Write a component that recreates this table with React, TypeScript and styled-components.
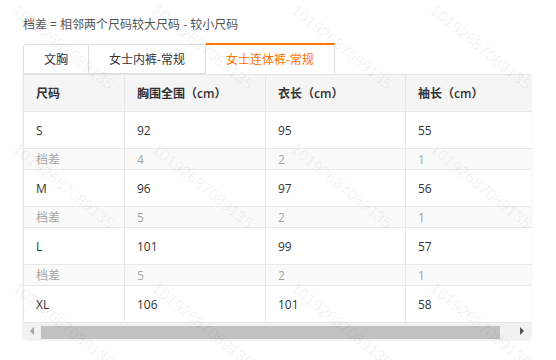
import styled, { createGlobalStyle, css } from "styled-components";

const GlobalStyle = createGlobalStyle`
  html, body {
    margin: 0;
    padding: 0;
    background: #fff;
  }
  body {
    font-family: "Open Sans", "Noto Sans CJK SC", sans-serif;
    font-size: 12px;
    color: #333;
  }
`;

const tabs = ["文胸", "女士内裤-常规", "女士连体裤-常规"];
const activeTab = 2;

const headers = ["尺码", "胸围全围（cm）", "衣长（cm）", "袖长（cm）"];

type SizeRow = { label: string; values: string[]; diff?: string[] };

const rows: SizeRow[] = [
  { label: "S", values: ["92", "95", "55"], diff: ["4", "2", "1"] },
  { label: "M", values: ["96", "97", "56"], diff: ["5", "2", "1"] },
  { label: "L", values: ["101", "99", "57"], diff: ["5", "2", "1"] },
  { label: "XL", values: ["106", "101", "58"] },
];

const colWidths = [101, 141, 140, 140];

export default function App() {
  return (
    <>
      <GlobalStyle />
      <Page>
        <Note>档差 = 相邻两个尺码较大尺码 - 较小尺码</Note>
        <TabBar>
          {tabs.map((t, i) => (
            <Tab key={t} $active={i === activeTab} $first={i === 0}>
              {t}
            </Tab>
          ))}
        </TabBar>
        <TableBox>
          <Scroller>
            <Table>
              <colgroup>
                {colWidths.map((w, i) => (
                  <col key={i} style={{ width: w }} />
                ))}
              </colgroup>
              <thead>
                <tr>
                  {headers.map((h) => (
                    <HeadCell key={h}>{h}</HeadCell>
                  ))}
                </tr>
              </thead>
              <tbody>
                {rows.flatMap((r) => {
                  const out = [
                    <tr key={r.label}>
                      <Cell>{r.label}</Cell>
                      {r.values.map((v, i) => (
                        <Cell key={i}>{v}</Cell>
                      ))}
                    </tr>,
                  ];
                  if (r.diff) {
                    out.push(
                      <tr key={r.label + "-diff"}>
                        <Cell $diff>档差</Cell>
                        {r.diff.map((v, i) => (
                          <Cell key={i} $diff>
                            {v}
                          </Cell>
                        ))}
                      </tr>
                    );
                  }
                  return out;
                })}
              </tbody>
            </Table>
          </Scroller>
          <ScrollBar>
            <ArrowButton>
              <Arrow $dir="left" />
            </ArrowButton>
            <Thumb />
            <Spacer />
            <ArrowButton>
              <Arrow $dir="right" />
            </ArrowButton>
          </ScrollBar>
        </TableBox>
        <WatermarkLayer>
          {Array.from({ length: 12 }).map((_, i) => (
            <WatermarkCell key={i}>
              <WatermarkText>10192687089135</WatermarkText>
            </WatermarkCell>
          ))}
        </WatermarkLayer>
      </Page>
    </>
  );
}

const Page = styled.div`
  position: relative;
  width: 556px;
  height: 360px;
  box-sizing: border-box;
  padding: 15px 25px 0 23px;
  overflow: hidden;
`;

const Note = styled.div`
  height: 20px;
  line-height: 20px;
  font-size: 12px;
  color: #555;
`;

const TabBar = styled.div`
  display: flex;
  margin-top: 9px;
  height: 30px;
`;

const Tab = styled.div<{ $active?: boolean; $first?: boolean }>`
  box-sizing: border-box;
  height: 30px;
  display: flex;
  align-items: center;
  justify-content: center;
  padding: 0 20px;
  font-size: 12px;
  color: #333;
  background: #fff;
  border: 1px solid #ddd;
  border-left: ${(p) => (p.$first ? "1px solid #ddd" : "none")};
  border-radius: ${(p) => (p.$first ? "3px 0 0 0" : "0")};
  ${(p) =>
    p.$active &&
    css`
      color: #ff7300;
      border-top: 2px solid #ff7300;
      border-bottom: 1px solid #fff;
      margin-top: -1px;
      height: 31px;
    `}
`;

const TableBox = styled.div`
  width: 508px;
  border-radius: 0 0 4px 4px;
  box-shadow: 0 1px 3px rgba(0, 0, 0, 0.1);
  overflow: hidden;
  background: #fff;
`;

const Scroller = styled.div`
  overflow: hidden;
  width: 100%;
`;

const Table = styled.table`
  width: 522px;
  table-layout: fixed;
  border-collapse: collapse;
`;

const HeadCell = styled.th`
  height: 37px;
  box-sizing: border-box;
  padding: 0 12px;
  text-align: left;
  font-weight: 600;
  font-size: 12px;
  color: #333;
  background: #f5f5f5;
  border: 1px solid #e6e6e6;
  white-space: nowrap;
`;

const Cell = styled.td<{ $diff?: boolean }>`
  height: ${(p) => (p.$diff ? "21px" : "37px")};
  box-sizing: border-box;
  padding: 0 12px;
  font-size: 12px;
  color: ${(p) => (p.$diff ? "#a5a5a5" : "#333")};
  background: ${(p) => (p.$diff ? "#fafafa" : "#fff")};
  border: 1px solid #e8e8e8;
  white-space: nowrap;
`;

const ScrollBar = styled.div`
  display: flex;
  align-items: stretch;
  height: 16px;
  background: #f1f1f1;
`;

const ArrowButton = styled.div`
  width: 18px;
  display: flex;
  align-items: center;
  justify-content: center;
`;

const Arrow = styled.div<{ $dir: "left" | "right" }>`
  width: 0;
  height: 0;
  border-top: 4px solid transparent;
  border-bottom: 4px solid transparent;
  ${(p) =>
    p.$dir === "left"
      ? css`
          border-right: 4px solid #a3a3a3;
        `
      : css`
          border-left: 4px solid #505050;
        `}
`;

const Thumb = styled.div`
  width: 459px;
  margin: 3px 0 0;
  background: #c1c1c1;
`;

const Spacer = styled.div`
  flex: 1;
`;

const WatermarkLayer = styled.div`
  position: absolute;
  inset: 0;
  padding: 2px 0 0 20px;
  display: grid;
  grid-template-columns: repeat(4, 139px);
  grid-auto-rows: 139px;
  pointer-events: none;
`;

const WatermarkCell = styled.div`
  position: relative;
`;

const WatermarkText = styled.span`
  display: block;
  white-space: nowrap;
  transform: rotate(39deg);
  transform-origin: 0 0;
  font-family: "Liberation Sans", sans-serif;
  font-size: 16px;
  line-height: 16px;
  color: rgba(0, 0, 0, 0.06);
`;
